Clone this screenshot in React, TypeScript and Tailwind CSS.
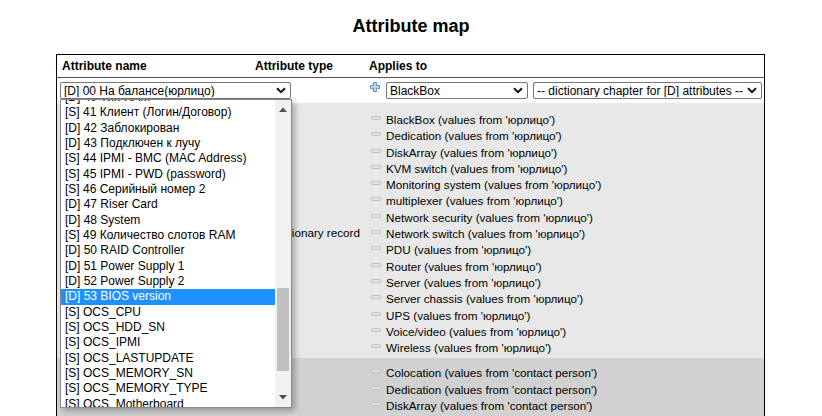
import React from "react";

const dropdownItems = [
	"[D] 40 Тип RAM",
	"[S] 41 Клиент (Логин/Договор)",
	"[D] 42 Заблокирован",
	"[D] 43 Подключен к лучу",
	"[S] 44 IPMI - BMC (MAC Address)",
	"[S] 45 IPMI - PWD (password)",
	"[S] 46 Серийный номер 2",
	"[D] 47 Riser Card",
	"[D] 48 System",
	"[S] 49 Количество слотов RAM",
	"[D] 50 RAID Controller",
	"[D] 51 Power Supply 1",
	"[D] 52 Power Supply 2",
	"[D] 53 BIOS version",
	"[S] OCS_CPU",
	"[S] OCS_HDD_SN",
	"[S] OCS_IPMI",
	"[S] OCS_LASTUPDATE",
	"[S] OCS_MEMORY_SN",
	"[S] OCS_MEMORY_TYPE",
	"[S] OCS_Motherboard",
];

const objectTypes = [
	"BlackBox",
	"Dedication",
	"DiskArray",
	"KVM switch",
	"Monitoring system",
	"multiplexer",
	"Network security",
	"Network switch",
	"PDU",
	"Router",
	"Server",
	"Server chassis",
	"UPS",
	"Voice/video",
	"Wireless",
];

const contactTypes = ["Colocation", "Dedication", "DiskArray"];

const Chevron = () => (
	<svg width="10" height="7" viewBox="0 0 10 7" className="shrink-0">
		<path d="M1 1.2 L5 5.2 L9 1.2" fill="none" stroke="#111" strokeWidth="2" />
	</svg>
);

const FakeSelect = ({ text, className }: { text: string; className: string }) => (
	<div
		className={`h-[17px] flex items-center justify-between pl-[3px] pr-[4px] border border-[#767676] rounded-[2px] bg-white text-[12px] leading-none text-black ${className}`}
	>
		<span className="whitespace-nowrap overflow-hidden">{text}</span>
		<Chevron />
	</div>
);

const MinusIcon = () => (
	<span className="mt-[4px] mr-[5px] w-[10px] h-[4px] shrink-0 rounded-[1px] border border-[#c4c4c4] bg-[#e2e2e2]" />
);

const AppliesItem = ({ name, source }: { name: string; source: string }) => (
	<div className="flex items-start h-[16.3px] leading-[16.3px]">
		<MinusIcon />
		<span className="whitespace-nowrap">
			{name} (values from '{source}')
		</span>
	</div>
);

const App = () => {
	return (
		<div
			className="w-[822px] h-[416px] overflow-hidden bg-white text-black"
			style={{ fontFamily: '"Liberation Sans", Arial, sans-serif' }}
		>
			<h1 className="pt-[16px] mb-[17px] text-center text-[18px] leading-[21px] font-bold">
				Attribute map
			</h1>

			<div className="relative ml-[56px] w-[709px] border border-black">
				{/* header */}
				<div className="grid grid-cols-[193px_114px_1fr] h-[23px] items-center border-b border-[#555] text-[12px] font-bold">
					<div className="pl-[5px]">Attribute name</div>
					<div className="pl-[5px]">Attribute type</div>
					<div className="pl-[5px]">Applies to</div>
				</div>

				{/* filter row */}
				<div className="grid grid-cols-[193px_114px_1fr] h-[25px] items-start pt-[4px]">
					<div className="pl-[3px]">
						<FakeSelect text="[D] 00 На балансе(юрлицо)" className="w-[231px]" />
					</div>
					<div />
					<div className="flex items-start pl-[6px]">
						<svg width="10" height="10" viewBox="0 0 10 10" className="mt-[0px] mr-[6px] shrink-0">
							<path
								d="M3.5 0.5 H6.5 V3.5 H9.5 V6.5 H6.5 V9.5 H3.5 V6.5 H0.5 V3.5 H3.5 Z"
								fill="#b9d3f2"
								stroke="#5f8fcf"
								strokeWidth="1"
							/>
						</svg>
						<FakeSelect text="BlackBox" className="w-[142px] mr-[5px]" />
						<FakeSelect text="-- dictionary chapter for [D] attributes --" className="w-[229px]" />
					</div>
				</div>

				{/* first mapping */}
				<div className="grid grid-cols-[193px_114px_1fr] bg-[#e8e8e8] text-[11.7px]">
					<div />
					<div className="flex items-center justify-end pr-[4px] pt-[4px]">
						<span className="whitespace-nowrap">Dictionary record</span>
					</div>
					<div className="pl-[7px] pt-[9px] pb-[2px]">
						{objectTypes.map((item) => (
							<AppliesItem key={item} name={item} source="юрлицо" />
						))}
					</div>
				</div>

				{/* second mapping */}
				<div className="grid grid-cols-[193px_114px_1fr] bg-[#d1d1d1] text-[11.7px]">
					<div />
					<div />
					<div className="pl-[7px] pt-[7px] pb-[4px]">
						{contactTypes.map((item) => (
							<AppliesItem key={item} name={item} source="contact person" />
						))}
					</div>
				</div>

				{/* opened select list */}
				<div className="absolute left-[3px] top-[44px] w-[232px] h-[309px] flex border border-[#8a8a8a] bg-white shadow-[3px_3px_6px_rgba(0,0,0,0.28)]">
					<div className="flex-1 overflow-hidden">
						<div className="mt-[-10px]">
							{dropdownItems.map((item) => (
								<div
									key={item}
									className={`h-[15.33px] leading-[15.33px] pl-[4px] text-[12px] whitespace-nowrap ${
										item === "[D] 53 BIOS version"
											? "bg-[#1e90ff] text-white"
											: "text-black"
									}`}
								>
									{item}
								</div>
							))}
						</div>
					</div>
					<div className="w-[16px] bg-[#f1f1f1] flex flex-col items-center">
						<svg width="8" height="5" viewBox="0 0 8 5" className="mt-[7px]">
							<path d="M0 5 L4 0.5 L8 5 Z" fill="#505050" />
						</svg>
						<div className="mt-[176px] w-[12px] h-[83px] bg-[#c1c1c1]" />
						<div className="flex-1" />
						<svg width="8" height="5" viewBox="0 0 8 5" className="mb-[7px]">
							<path d="M0 0 L8 0 L4 4.5 Z" fill="#505050" />
						</svg>
					</div>
				</div>
			</div>
		</div>
	);
};

export default App;
